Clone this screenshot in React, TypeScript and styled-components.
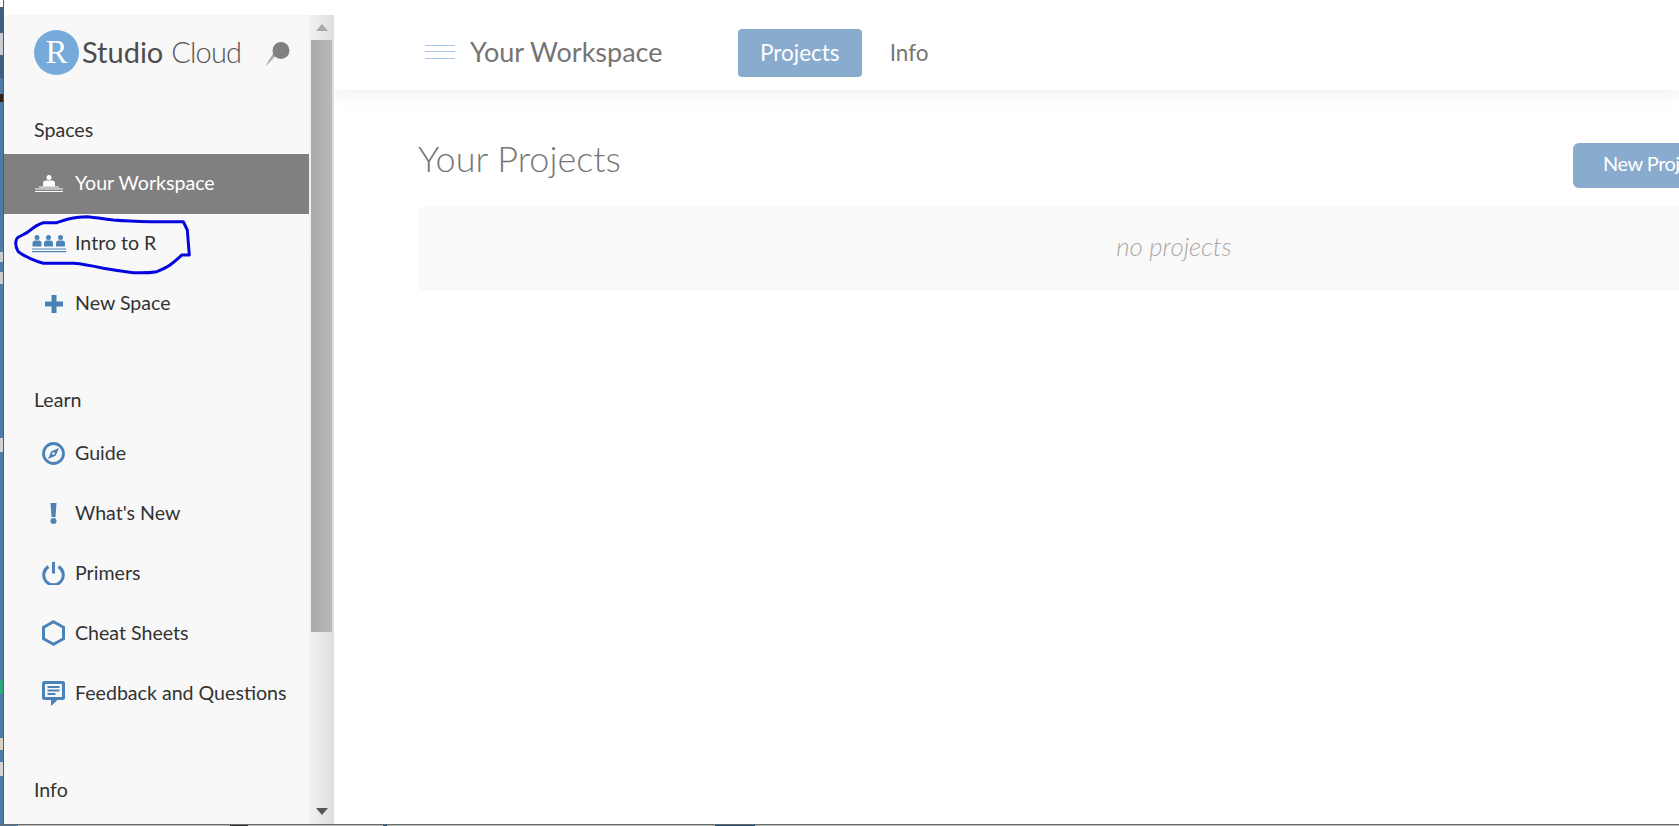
import React from "react";
import styled, { createGlobalStyle } from "styled-components";

const Global = createGlobalStyle`
  html, body { margin: 0; padding: 0; height: 100%; overflow: hidden; background: #fff; }
  #root { height: 100%; }
  * { box-sizing: border-box; }
`;

const Screen = styled.div`
  width: 1679px;
  height: 826px;
  display: flex;
  flex-direction: column;
  font-family: Lato, "Open Sans", sans-serif;
  overflow: hidden;
`;
const Desk = styled.div`
  flex: 1;
  min-height: 0;
  display: flex;
`;
const DesktopStrip = styled.div`
  width: 4px;
  flex: none;
  border-right: 1px solid #3c5f82;
  background: linear-gradient(
    to bottom,
    #ffffff 0 7px,
    #3f5f80 7px 33px,
    #c9ccd0 33px 55px,
    #3f5f80 55px 78px,
    #4f7ba8 78px 94px,
    #2d2418 94px 102px,
    #4f7ba8 102px 252px,
    #c8cdd2 252px 262px,
    #4f7ba8 262px 272px,
    #c8cdd2 272px 284px,
    #4f7ba8 284px 438px,
    #cfd2d6 438px 452px,
    #4f7ba8 452px 680px,
    #2fa77c 680px 694px,
    #4f7ba8 694px 738px,
    #d4d0c4 738px 750px,
    #4f7ba8 750px 762px,
    #d4d4d4 762px 776px,
    #4f7ba8 776px
  );
`;
const Window = styled.div`
  flex: 1;
  min-width: 0;
  display: flex;
  background: #fff;
`;
const TaskEdge = styled.div`
  height: 2px;
  flex: none;
  border-top: 1px solid #6a6a6a;
  background: linear-gradient(
    to right,
    #4f7ba8 0 18px,
    #bdbdbd 18px 230px,
    #333 230px 248px,
    #bdbdbd 248px 383px,
    #1d4a78 383px 387px,
    #bdbdbd 387px 715px,
    #1d4a78 715px 755px,
    #bdbdbd 755px
  );
`;
const SideColumn = styled.aside`
  width: 330px;
  flex: none;
  margin-top: 15px;
  display: flex;
  min-height: 0;
`;
const Sidebar = styled.nav`
  width: 305px;
  flex: none;
  background: #f8f8f8;
  overflow: hidden;
`;
const Brand = styled.div`
  height: 75px;
  padding-left: 30px;
  padding-right: 19px;
  display: flex;
  align-items: center;
  font-size: 29px;
`;
const BrandBadge = styled.span`
  width: 45px;
  height: 45px;
  border-radius: 50%;
  background: #75aadb;
  color: #fff;
  display: flex;
  align-items: center;
  justify-content: center;
  font-family: "Liberation Serif", serif;
  font-size: 33px;
  flex: none;
`;
const BrandStudio = styled.span`
  margin-left: 3px;
  padding-bottom: 2px;
  color: #4d4d4d;
`;
const BrandCloud = styled.span`
  margin-left: 8px;
  padding-bottom: 2px;
  font-weight: 300;
  letter-spacing: -0.85px;
  color: #555;
`;
const PinSlot = styled.span`
  margin-left: auto;
  margin-top: 3px;
  display: flex;
`;
const SectionLabel = styled.div<{ $gap: number; $after?: number }>`
  margin-top: ${(p) => p.$gap}px;
  margin-bottom: ${(p) => p.$after ?? 0}px;
  padding-left: 30px;
  height: 24px;
  line-height: 24px;
  font-size: 19.6px;
  color: #333;
`;
const Row = styled.div<{ $active?: boolean }>`
  height: 60px;
  display: flex;
  align-items: center;
  padding-left: 28px;
  font-size: 19.6px;
  background: ${(p) => (p.$active ? "#808080" : "transparent")};
  color: ${(p) => (p.$active ? "#fff" : "#333")};
`;
const RowLabel = styled.span<{ $lift: number }>`
  padding-bottom: ${(p) => p.$lift}px;
`;
const RowIcon = styled.span<{ $wide?: boolean }>`
  width: ${(p) => (p.$wide ? 34 : 43)}px;
  margin-right: ${(p) => (p.$wide ? 9 : 0)}px;
  flex: none;
  display: flex;
  align-items: center;
  justify-content: center;
`;
const Scrollbar = styled.div`
  width: 25px;
  flex: none;
  background: linear-gradient(to right, #f2f2f2, #dedede);
  display: flex;
  flex-direction: column;
  align-items: center;
`;
const ScrollArrow = styled.div<{ $down?: boolean }>`
  height: 25px;
  width: 100%;
  display: flex;
  align-items: center;
  justify-content: center;
  &::after {
    content: "";
    border-left: 6px solid transparent;
    border-right: 6px solid transparent;
    ${(p) =>
      p.$down
        ? "border-top: 7px solid #555;"
        : "border-bottom: 7px solid #aaa;"}
  }
`;
const ScrollTrack = styled.div`
  flex: 1;
  width: 100%;
  padding: 0 2px;
`;
const ScrollThumb = styled.div`
  height: 592px;
  background: linear-gradient(to right, #a9a9a9, #bababa);
`;
const Main = styled.main`
  flex: 1;
  min-width: 0;
  display: flex;
  flex-direction: column;
  background: #fff;
  overflow: hidden;
`;
const TopBar = styled.header`
  height: 90px;
  flex: none;
  padding: 16px 0 0 91px;
  display: flex;
  align-items: center;
  background: #fff;
  box-shadow: 0 4px 18px rgba(0, 0, 0, 0.07);
  position: relative;
`;
const Burger = styled.span`
  width: 30px;
  height: 14px;
  flex: none;
  margin: 0 15px 2px 0;
  border-top: 1.5px solid #a3c6ea;
  border-bottom: 1.5px solid #a3c6ea;
  position: relative;
  &::after {
    content: "";
    position: absolute;
    left: 0;
    right: 0;
    top: 4.5px;
    height: 1.5px;
    background: #a3c6ea;
  }
`;
const BarTitle = styled.div`
  font-size: 27px;
  color: #757575;
  width: 268px;
  flex: none;
  padding-bottom: 4px;
`;
const Tab = styled.div<{ $active?: boolean }>`
  height: 48px;
  padding: 0 22px 2px;
  display: flex;
  align-items: center;
  border-radius: 4px;
  font-size: 22.5px;
  background: ${(p) => (p.$active ? "#88abce" : "transparent")};
  color: ${(p) => (p.$active ? "#fff" : "#777")};
  & + & {
    margin-left: 6px;
  }
`;
const Content = styled.section`
  flex: none;
  padding-left: 84px;
  width: 1596px;
`;
const ContentHead = styled.div`
  height: 117px;
  display: flex;
  align-items: flex-start;
  justify-content: space-between;
  padding: 46px 187px 0 0;
`;
const PageTitle = styled.h1`
  margin: 0;
  font-size: 36px;
  line-height: 44px;
  font-weight: 300;
  color: #777;
`;
const NewButton = styled.div`
  width: 170px;
  height: 45px;
  margin-top: 7px;
  flex: none;
  padding: 0 0 6px 30px;
  display: flex;
  align-items: center;
  border-radius: 6px;
  font-size: 20px;
  letter-spacing: -0.5px;
  white-space: nowrap;
  background: #88abce;
  color: #fff;
`;
const Empty = styled.div`
  height: 84px;
  display: flex;
  align-items: center;
  justify-content: center;
  background: #f9f9f9;
  font-size: 25.8px;
  font-style: italic;
  font-weight: 300;
  color: #aaa;
  padding-bottom: 6px;
`;
const ScribbleSvg = styled.svg`
  position: absolute;
  left: 11px;
  top: 2px;
  overflow: visible;
  pointer-events: none;
`;
const AnnotatedRow = styled(Row)`
  position: relative;
`;

const blue = "#4b82b8";

const Pin = () => (
  <svg width="24" height="24" viewBox="0 0 24 24">
    <path d="M10 13.5 L0.5 23.5 L0 23 L7.5 11 Z" fill="#a8a8a8" />
    <circle cx="15" cy="8.5" r="8.5" fill="#808080" />
  </svg>
);
const Person = ({ x, c, half }: { x: number; c: string; half: number }) => (
  <g fill={c}>
    <circle cx={x} cy="2.6" r="2.5" />
    <path d={`M${x - half} 11.5 v-3 q0 -3 3 -3 h${2 * half - 6} q3 0 3 3 v3 Z`} />
  </g>
);
const WorkspaceIcon = () => (
  <svg width="28" height="18" viewBox="0 0 28 18">
    <Person x={14} c="#fff" half={6} />
    <path d="M4 12h20" stroke="#fff" strokeWidth="1" />
    <path d="M0 14h28M0 16.5h28" stroke="#fff" strokeWidth="1.2" />
  </svg>
);
const TeamIcon = () => (
  <svg width="34" height="18" viewBox="0 0 34 18">
    <Person x={5} c={blue} half={4.5} />
    <Person x={16.5} c={blue} half={4.5} />
    <Person x={28.5} c={blue} half={4.5} />
    <path d="M0 14h34M0 16.6h34" stroke={blue} strokeWidth="1.2" />
  </svg>
);
const PlusIcon = () => (
  <svg width="18" height="18" viewBox="0 0 18 18">
    <path d="M9 0v18M0 9h18" stroke={blue} strokeWidth="5" />
  </svg>
);
const CompassIcon = () => (
  <svg width="23" height="23" viewBox="0 0 23 23">
    <circle cx="11.5" cy="11.5" r="10" fill="none" stroke={blue} strokeWidth="2.8" />
    <path d="M17 6 L13.7 13.7 L6 17 L9.3 9.3 Z" fill={blue} />
    <circle cx="11.5" cy="11.5" r="1.3" fill="#f8f8f8" />
  </svg>
);
const BangIcon = () => (
  <svg width="7" height="21" viewBox="0 0 7 21">
    <path d="M0.5 0h6l-1 14H1.5Z" fill={blue} />
    <circle cx="3.5" cy="18" r="3" fill={blue} />
  </svg>
);
const PowerIcon = () => (
  <svg width="23" height="23" viewBox="0 0 23 23" fill="none" stroke={blue} strokeWidth="3">
    <path d="M6.5 4.6 A9.8 9.8 0 1 0 16.5 4.6" />
    <path d="M11.5 0V11.5" />
  </svg>
);
const HexIcon = () => (
  <svg width="23" height="26" viewBox="0 0 23 26">
    <path d="M11.5 1.8 L21.5 7.3 V18.7 L11.5 24.2 L1.5 18.7 V7.3 Z" fill="none" stroke={blue} strokeWidth="3" />
  </svg>
);
const ChatIcon = () => (
  <svg width="23" height="25" viewBox="0 0 23 25">
    <path d="M2.5 0h18a2.5 2.5 0 0 1 2.5 2.5v14a2.5 2.5 0 0 1-2.5 2.5h-5l-6.5 6V19H2.5A2.5 2.5 0 0 1 0 16.5v-14A2.5 2.5 0 0 1 2.5 0Z" fill={blue} />
    <path d="M3 3h17v13H3Z" fill="#f8f8f8" />
    <path d="M5.5 6h12M5.5 9.5h12M5.5 13h8" stroke={blue} strokeWidth="1.8" />
  </svg>
);
const Scribble = () => (
  <ScribbleSvg width="176" height="58" viewBox="0 0 176 58">
    <path
      d="M0.7 27.3 C1 24 2 22 3.3 21.3 C7 19 10 18 13.3 15.7 C19 11 23 8 28.3 6.7 L41.7 6.7 C47 5 51 3.5 56.7 2.3 C62 1 66 0.7 71.7 0.7 C80 1.5 90 3 98.3 4 C110 5 122 5.5 135 5.7 L168.3 5.7 L172.3 14 L174.3 39 L166.7 39 C163 43 159 46 155 49 C151 52 146 54 141.7 55.7 C134 57 126 57 118.3 56.7 C108 55.5 98 54 88.3 52.3 C78 50 68 48 58.3 47.3 L28.3 47.3 C23 46 19 44 15 42.3 C10 40 6 38 3.3 35.7 C1.5 33 0.7 30 0.7 27.3 Z"
      fill="none"
      stroke="#0505e0"
      strokeWidth="3"
      strokeLinejoin="round"
    />
  </ScribbleSvg>
);

const learn: [string, React.ReactNode][] = [
  ["Guide", <CompassIcon />],
  ["What's New", <BangIcon />],
  ["Primers", <PowerIcon />],
  ["Cheat Sheets", <HexIcon />],
  ["Feedback and Questions", <ChatIcon />],
];

export default function App() {
  return (
    <Screen>
      <Global />
      <Desk>
        <DesktopStrip />
        <Window>
          <SideColumn>
            <Sidebar>
              <Brand>
                <BrandBadge>R</BrandBadge>
                <BrandStudio>Studio</BrandStudio>
                <BrandCloud>Cloud</BrandCloud>
                <PinSlot>
                  <Pin />
                </PinSlot>
              </Brand>
              <SectionLabel $gap={28} $after={12}>Spaces</SectionLabel>
              <Row $active>
                <RowIcon $wide>
                  <WorkspaceIcon />
                </RowIcon>
                <RowLabel $lift={4}>Your Workspace</RowLabel>
              </Row>
              <AnnotatedRow>
                <RowIcon $wide>
                  <TeamIcon />
                </RowIcon>
                <RowLabel $lift={3}>Intro to R</RowLabel>
                <Scribble />
              </AnnotatedRow>
              <Row>
                <RowIcon>
                  <PlusIcon />
                </RowIcon>
                <RowLabel $lift={4}>New Space</RowLabel>
              </Row>
              <SectionLabel $gap={54} $after={11}>Learn</SectionLabel>
              {learn.map(([label, icon]) => (
                <Row key={label}>
                  <RowIcon>{icon}</RowIcon>
                  <RowLabel $lift={2}>{label}</RowLabel>
                </Row>
              ))}
              <SectionLabel $gap={55}>Info</SectionLabel>
            </Sidebar>
            <Scrollbar>
              <ScrollArrow />
              <ScrollTrack>
                <ScrollThumb />
              </ScrollTrack>
              <ScrollArrow $down />
            </Scrollbar>
          </SideColumn>
          <Main>
            <TopBar>
              <Burger />
              <BarTitle>Your Workspace</BarTitle>
              <Tab $active>Projects</Tab>
              <Tab>Info</Tab>
            </TopBar>
            <Content>
              <ContentHead>
                <PageTitle>Your Projects</PageTitle>
                <NewButton>New Project</NewButton>
              </ContentHead>
              <Empty>no projects</Empty>
            </Content>
          </Main>
        </Window>
      </Desk>
      <TaskEdge />
    </Screen>
  );
}
